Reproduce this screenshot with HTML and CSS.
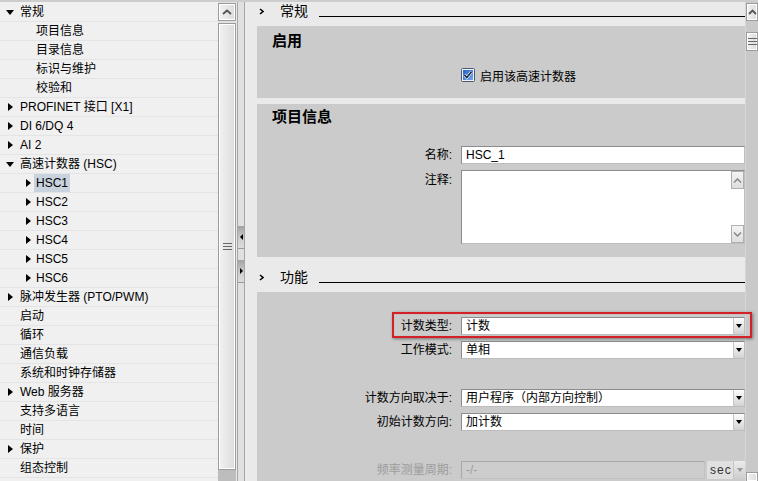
FILE: index.html
```html
<!DOCTYPE html>
<html lang="zh-CN">
<head>
  <meta charset="UTF-8">
  <title>HSC1 属性</title>
  <link rel="stylesheet" href="styles.css">
</head>
<body>
  <div class="app">
    <!-- 左侧导航树 -->
    <div class="tree">
      <div class="tree-row"><span class="slot"><i class="tri-d"></i></span>常规</div>
      <div class="tree-row child"><span class="slot"></span>项目信息</div>
      <div class="tree-row child"><span class="slot"></span>目录信息</div>
      <div class="tree-row child"><span class="slot"></span>标识与维护</div>
      <div class="tree-row child"><span class="slot"></span>校验和</div>
      <div class="tree-row"><span class="slot"><i class="tri-r"></i></span>PROFINET 接口 [X1]</div>
      <div class="tree-row"><span class="slot"><i class="tri-r"></i></span>DI 6/DQ 4</div>
      <div class="tree-row"><span class="slot"><i class="tri-r"></i></span>AI 2</div>
      <div class="tree-row"><span class="slot"><i class="tri-d"></i></span>高速计数器 (HSC)</div>
      <div class="tree-row child"><span class="slot"><i class="tri-r"></i></span><span class="sel">HSC1</span></div>
      <div class="tree-row child"><span class="slot"><i class="tri-r"></i></span>HSC2</div>
      <div class="tree-row child"><span class="slot"><i class="tri-r"></i></span>HSC3</div>
      <div class="tree-row child"><span class="slot"><i class="tri-r"></i></span>HSC4</div>
      <div class="tree-row child"><span class="slot"><i class="tri-r"></i></span>HSC5</div>
      <div class="tree-row child"><span class="slot"><i class="tri-r"></i></span>HSC6</div>
      <div class="tree-row"><span class="slot"><i class="tri-r"></i></span>脉冲发生器 (PTO/PWM)</div>
      <div class="tree-row"><span class="slot"></span>启动</div>
      <div class="tree-row"><span class="slot"></span>循环</div>
      <div class="tree-row"><span class="slot"></span>通信负载</div>
      <div class="tree-row"><span class="slot"></span>系统和时钟存储器</div>
      <div class="tree-row"><span class="slot"><i class="tri-r"></i></span>Web 服务器</div>
      <div class="tree-row"><span class="slot"></span>支持多语言</div>
      <div class="tree-row"><span class="slot"></span>时间</div>
      <div class="tree-row"><span class="slot"><i class="tri-r"></i></span>保护</div>
      <div class="tree-row"><span class="slot"></span>组态控制</div>
    </div>

    <div class="vscroll wide">
      <div class="sbtn"><svg width="10" height="6" viewBox="0 0 10 6"><polyline points="1,5 5,1.5 9,5" fill="none" stroke="#555" stroke-width="1.8"/></svg></div>
      <div class="thumb tall"><svg width="9" height="7" viewBox="0 0 9 7"><path d="M0 .5h9M0 3.5h9M0 6.5h9" stroke="#666"/></svg></div>
      <div class="track-end"></div>
    </div>

    <div class="splitter">
      <div class="split-btn"><i class="tri-l-s"></i></div>
      <div class="split-btn"><i class="tri-r-s"></i></div>
    </div>

    <!-- 右侧属性区 -->
    <div class="props">
      <section class="sec">
        <div class="sec-head">
          <span class="chev"><svg width="5" height="7" viewBox="0 0 5 7"><polyline points="1,1 4,3.5 1,6" fill="none" stroke="#000" stroke-width="1.5"/></svg></span>
          <span class="sec-title">常规</span>
          <span class="sec-line"></span>
        </div>
        <div class="panel p-enable">
          <div class="panel-title">启用</div>
          <div class="field gap-top">
            <span></span>
            <label class="check">
              <svg width="14" height="14" viewBox="0 0 14 14">
                <defs><linearGradient id="cb" x1="0" y1="0" x2="1" y2="1"><stop offset="0" stop-color="#2a64c4"/><stop offset="1" stop-color="#6fa6e8"/></linearGradient></defs>
                <rect x=".5" y=".5" width="13" height="13" rx="1" fill="#eef3fa" stroke="#4d5a6e"/>
                <rect x="2" y="2" width="10" height="10" fill="url(#cb)"/>
                <polyline points="3.4,6.8 5.8,9.5 10.6,3.8" fill="none" stroke="#fff" stroke-width="2.8"/>
                <polyline points="3.4,6.8 5.8,9.5 10.6,3.8" fill="none" stroke="#0d2650" stroke-width="1.6"/>
              </svg>
              启用该高速计数器
            </label>
          </div>
        </div>
        <div class="panel p-info">
          <div class="panel-title">项目信息</div>
          <div class="field info-name">
            <span class="lbl">名称:</span>
            <div class="input"><span class="val">HSC_1</span></div>
          </div>
          <div class="field info-note">
            <span class="lbl top">注释:</span>
            <div class="textarea">
              <div class="ta-body"></div>
              <div class="ta-scroll">
                <div class="ta-btn"><svg width="9" height="5" viewBox="0 0 9 5"><polyline points="1,4.5 4.5,1 8,4.5" fill="none" stroke="#888" stroke-width="1.5"/></svg></div>
                <div class="ta-btn"><svg width="9" height="5" viewBox="0 0 9 5"><polyline points="1,.5 4.5,4 8,.5" fill="none" stroke="#888" stroke-width="1.5"/></svg></div>
              </div>
            </div>
          </div>
        </div>
      </section>

      <section class="sec">
        <div class="sec-head">
          <span class="chev"><svg width="5" height="7" viewBox="0 0 5 7"><polyline points="1,1 4,3.5 1,6" fill="none" stroke="#000" stroke-width="1.5"/></svg></span>
          <span class="sec-title">功能</span>
          <span class="sec-line"></span>
        </div>
        <div class="panel p-func">
          <div class="group">
            <div class="field">
              <span class="lbl">计数类型:</span>
              <div class="select"><span class="val">计数</span><span class="drop"><i class="tri-dd"></i></span></div>
            </div>
            <div class="field">
              <span class="lbl">工作模式:</span>
              <div class="select"><span class="val">单相</span><span class="drop"><i class="tri-dd"></i></span></div>
            </div>
          </div>
          <div class="group">
            <div class="field">
              <span class="lbl">计数方向取决于:</span>
              <div class="select"><span class="val">用户程序（内部方向控制）</span><span class="drop"><i class="tri-dd"></i></span></div>
            </div>
            <div class="field">
              <span class="lbl">初始计数方向:</span>
              <div class="select"><span class="val">加计数</span><span class="drop"><i class="tri-dd"></i></span></div>
            </div>
          </div>
          <div class="group">
            <div class="field disabled">
              <span class="lbl">频率测量周期:</span>
              <div class="unit-box">
                <div class="input off"><span class="val">-/-</span></div>
                <span class="unit">sec</span>
                <span class="drop off"><i class="tri-dd"></i></span>
              </div>
            </div>
          </div>
        </div>
      </section>
    </div>

    <div class="vscroll narrow">
      <div class="sbtn"><svg width="9" height="6" viewBox="0 0 9 6"><polyline points="1,5 4.5,1.5 8,5" fill="none" stroke="#555" stroke-width="1.8"/></svg></div>
      <div class="thumb short"><svg width="9" height="7" viewBox="0 0 9 7"><path d="M0 .5h9M0 3.5h9M0 6.5h9" stroke="#666"/></svg></div>
      <div class="sbtn bottom"></div>
    </div>

    <!-- 标注框 -->
    <div class="callout"></div>
  </div>
</body>
</html>
```

FILE: styles.css
```css
* {
  box-sizing: border-box;
}
body {
  margin: 0;
  font-family: "Liberation Sans", "Noto Sans CJK SC", sans-serif;
  font-size: 12px;
  color: #000;
  overflow: hidden;
}
.app {
  position: relative;
  display: flex;
  width: 758px;
  height: 481px;
  border-top: 2px solid #cdcdcd;
  background: #eaeaea;
  overflow: hidden;
}

/* tree */
.tree {
  flex: none;
  width: 218px;
  padding-top: 1px;
  background: #f0f0f0;
}
.tree-row {
  display: flex;
  align-items: center;
  height: 19px;
  border-bottom: 1px solid #e4e4e4;
  line-height: 18px;
  white-space: nowrap;
}
.slot {
  display: flex;
  justify-content: center;
  align-items: center;
  width: 20px;
  height: 18px;
}
.tree-row.child {
  padding-left: 20px;
}
.child .slot {
  width: 16px;
}
.sel {
  margin-left: -2px;
  padding: 0 2px;
  background: #c8d3dd;
}
.tri-d {
  border-top: 5px solid #000;
  border-left: 4.5px solid transparent;
  border-right: 4.5px solid transparent;
}
.tri-r {
  border-left: 5px solid #000;
  border-top: 4.5px solid transparent;
  border-bottom: 4.5px solid transparent;
}

/* scrollbars */
.vscroll {
  flex: none;
  display: flex;
  flex-direction: column;
  background: #e2e2e2;
  padding-top: 1px;
}
.vscroll.wide {
  width: 18px;
}
.vscroll.narrow {
  width: 13px;
  background: #c9c9c9;
  border-left: 1px solid #d6d6d6;
}
.sbtn,
.thumb {
  display: flex;
  justify-content: center;
  align-items: center;
  border: 1px solid #9c9c9c;
  box-shadow: inset 0 0 0 1px #fff;
  background: linear-gradient(90deg, #f2f2f2, #dcdcdc);
}
.sbtn {
  height: 18px;
}
.thumb.tall {
  margin-top: 2px;
  height: 447px;
}
.thumb.short {
  margin-top: 11px;
  height: 19px;
}
.sbtn.bottom {
  margin-top: auto;
  height: 9px;
  border-bottom: none;
}
.track-end {
  flex: 1;
  background: #bdbdbd;
}

/* splitter */
.splitter {
  flex: none;
  width: 8px;
  margin-left: 1px;
  border-left: 1px solid #a6a6a6;
  border-right: 1px solid #a6a6a6;
  background: #e0e0e0;
  padding-top: 224px;
  display: flex;
  flex-direction: column;
  gap: 11px;
}
.split-btn {
  display: flex;
  justify-content: center;
  align-items: center;
  height: 23px;
  background: linear-gradient(#a2a2a2, #cfcfcf 60%, #dcdcdc);
  border-bottom: 1px solid #9a9a9a;
}
.tri-l-s {
  border-right: 3px solid #000;
  border-top: 3.5px solid transparent;
  border-bottom: 3.5px solid transparent;
}
.tri-r-s {
  border-left: 3px solid #000;
  border-top: 3.5px solid transparent;
  border-bottom: 3.5px solid transparent;
}

/* property pane */
.props {
  flex: 1;
  padding-left: 12px;
  overflow: hidden;
}
.sec {
  display: flex;
  flex-direction: column;
  gap: 6px;
}
.sec + .sec {
  margin-top: 11px;
}
.sec-head {
  display: flex;
  align-items: flex-start;
  height: 18px;
}
.chev {
  display: flex;
  align-items: center;
  width: 23px;
  height: 18px;
  padding-left: 2px;
}
.sec-title {
  font-size: 14px;
  line-height: 18px;
}
.sec-line {
  flex: 1;
  height: 15px;
  margin-left: 11px;
  border-bottom: 1px solid #000;
}
.panel {
  background: #cbcbcb;
}
.panel-title {
  padding-left: 15px;
  font-size: 15px;
  font-weight: bold;
  line-height: 20px;
}
.p-enable {
  padding: 5px 0 14px;
}
.p-info {
  padding: 3px 0 13px;
}
.p-func {
  padding-top: 25px;
  height: 200px;
  display: flex;
  flex-direction: column;
  gap: 30px;
}
.group {
  display: flex;
  flex-direction: column;
  gap: 6px;
}
.field {
  display: grid;
  grid-template-columns: 195px 1fr;
  column-gap: 9px;
  align-items: center;
}
.gap-top {
  margin-top: 15px;
}
.info-name {
  margin-top: 19px;
}
.info-note {
  margin-top: 6px;
  align-items: start;
}
.lbl {
  text-align: right;
  line-height: 18px;
  white-space: nowrap;
}
.lbl.top {
  padding-top: 1px;
}
.check {
  display: flex;
  align-items: center;
  gap: 5px;
  height: 18px;
}

/* inputs */
.input,
.select {
  display: flex;
  height: 18px;
  border: 1px solid;
  border-color: #8c8c8c #bdbdbd #bdbdbd #8c8c8c;
  background: #fff;
}
.val {
  flex: 1;
  padding-left: 4px;
  line-height: 16px;
  white-space: nowrap;
}
.drop {
  display: flex;
  justify-content: center;
  align-items: center;
  width: 11px;
  border-left: 1px solid #c6c6c6;
  background: linear-gradient(#fdfdfd, #d2d2d2);
}
.tri-dd {
  border-top: 4px solid #000;
  border-left: 3.5px solid transparent;
  border-right: 3.5px solid transparent;
}
.textarea {
  display: flex;
  height: 74px;
  border: 1px solid;
  border-color: #8c8c8c #bdbdbd #bdbdbd #8c8c8c;
  background: #fff;
}
.ta-body {
  flex: 1;
}
.ta-scroll {
  display: flex;
  flex-direction: column;
  justify-content: space-between;
  width: 13px;
}
.ta-btn {
  display: flex;
  justify-content: center;
  align-items: center;
  height: 18px;
  border: 1px solid #b0b0b0;
  background: linear-gradient(#f4f4f4, #dedede);
}

/* disabled row */
.disabled .lbl {
  color: #9c9c9c;
}
.unit-box {
  display: flex;
  height: 18px;
}
.input.off {
  flex: 1;
  background: #cdcdcd;
  border-color: #a8a8a8 #c2c2c2 #c2c2c2 #a8a8a8;
  color: #9c9c9c;
}
.unit {
  width: 26px;
  margin-left: 2px;
  padding-left: 3px;
  background: #e0e0e0;
  color: #333;
  line-height: 18px;
  letter-spacing: 1px;
}
.drop.off {
  width: 12px;
  background: linear-gradient(#ececec, #cdcdcd);
}
.drop.off .tri-dd {
  border-top-color: #9a9a9a;
}

/* red annotation frame */
.callout {
  position: absolute;
  left: 392px;
  top: 310px;
  width: 360px;
  height: 26px;
  border: 2px solid #d42027;
  box-shadow: 1px 1px 3px rgba(0, 0, 0, 0.45), inset 0 0 1px rgba(0, 0, 0, 0.3);
}
```
